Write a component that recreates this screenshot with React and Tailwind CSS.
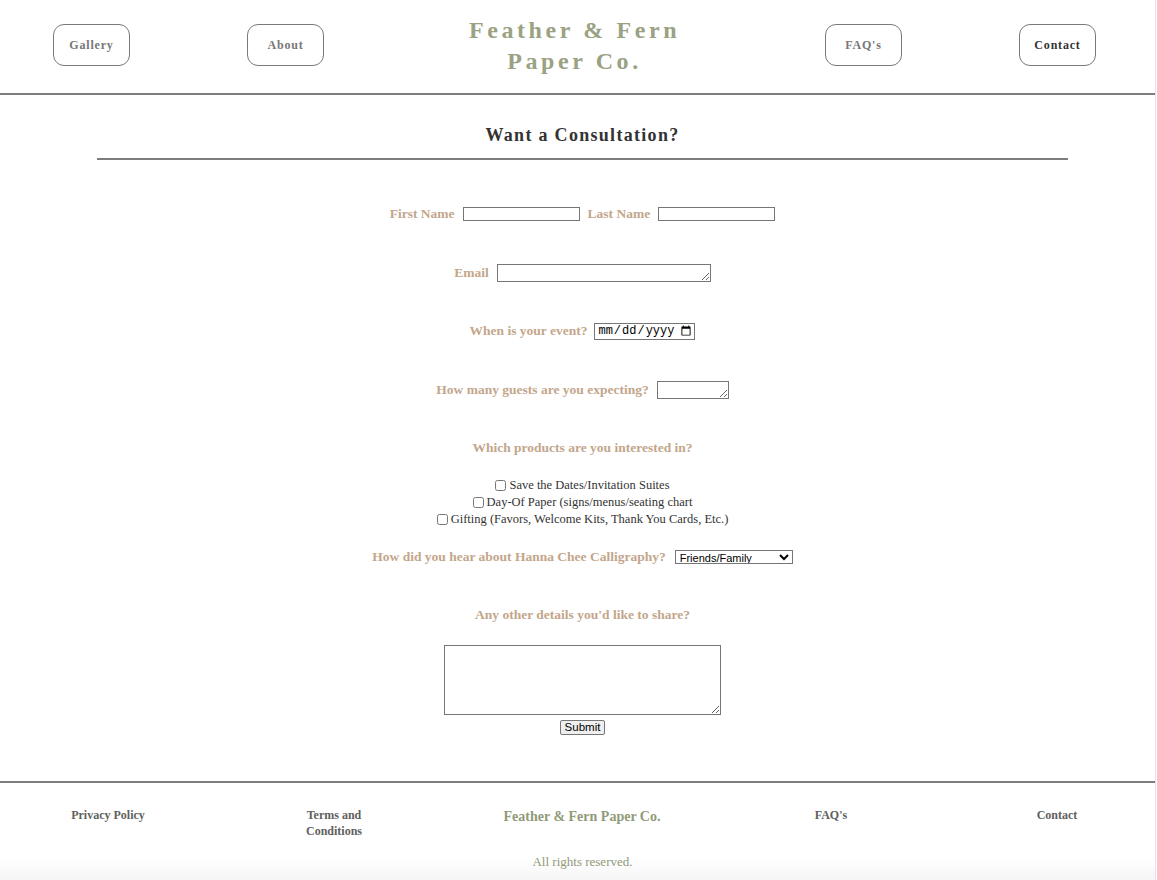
import { useState } from 'react';

const serif = { fontFamily: '"Liberation Serif", "Times New Roman", serif' };

const navLinks = ['Gallery', 'About'];
const navRight = ['FAQ\'s', 'Contact'];

const NavButton = ({ label, dark }) => (
  <button
    className={`flex h-[42px] w-[77px] items-center justify-center rounded-[11px] border border-[#7a7a7a] text-[12px] font-semibold tracking-[0.8px] ${dark ? 'text-[#333]' : 'text-[#777]'}`}
  >
    {label}
  </button>
);

const products = [
  'Save the Dates/Invitation Suites',
  'Day-Of Paper (signs/menus/seating chart',
  'Gifting (Favors, Welcome Kits, Thank You Cards, Etc.)',
];

const Label = ({ children }) => (
  <span className="text-[13.5px] font-bold leading-[20px] text-[#c3a68b]">{children}</span>
);

export default function App() {
  const [source, setSource] = useState('Friends/Family');

  return (
    <div className="flex w-[1157px] bg-white" style={serif}>
      <div className="w-[1155px]">
        {/* header */}
        <header className="flex h-[95px] items-center border-b-2 border-[#7d7d7d] pl-[53px] pr-[59px] pb-[3px]">
          <NavButton label={navLinks[0]} />
          <div className="ml-[117px]">
            <NavButton label={navLinks[1]} />
          </div>
          <div className="flex-1 pt-[1px] text-center text-[24px] font-semibold leading-[31px] tracking-[3.6px] text-[#9aa283]">
            <div>Feather &amp; Fern</div>
            <div>Paper Co.</div>
          </div>
          <NavButton label={navRight[0]} />
          <div className="ml-[117px]">
            <NavButton label={navRight[1]} dark />
          </div>
        </header>

        <div className="pl-[10px]">
          {/* heading */}
          <div className="mt-[30px] flex h-[20px] items-center justify-center text-[18px] font-bold tracking-[1.3px] text-[#333]">
            Want a Consultation?
          </div>
          <div className="mx-auto mt-[13px] h-[2px] w-[971px] bg-[#7d7d7d]" />

          {/* form */}
          <form className="flex flex-col items-center" onSubmit={(e) => e.preventDefault()}>
            <div className="mt-[44px] flex h-[20px] items-center">
              <Label>First Name</Label>
              <input className="ml-[8px] h-[14px] w-[117px] border border-[#767676]" />
              <span className="ml-[8px] flex"><Label>Last Name</Label></span>
              <input className="ml-[8px] h-[14px] w-[117px] border border-[#767676]" />
            </div>

            <div className="mt-[39px] flex h-[20px] items-center">
              <Label>Email</Label>
              <textarea rows={1} className="ml-[8px] h-[18px] w-[214px] border border-[#767676]" />
            </div>

            <div className="mt-[38px] flex h-[20px] items-center">
              <Label>When is your event?</Label>
              <input
                type="date"
                className="ml-[7px] h-[17px] w-[101px] border border-[#767676] pl-[2px] text-[12px] leading-none text-black"
                style={{ fontFamily: '"Liberation Mono", monospace' }}
              />
            </div>

            <div className="mt-[39px] flex h-[20px] items-center">
              <Label>How many guests are you expecting?</Label>
              <textarea rows={1} className="ml-[8px] h-[18px] w-[72px] border border-[#767676]" />
            </div>

            <div className="mt-[38px] flex h-[20px] items-center">
              <Label>Which products are you interested in?</Label>
            </div>

            <div className="mt-[19px] flex flex-col items-center text-[12.5px] leading-[17px] text-[#333]">
              {products.map((p) => (
                <label key={p} className="flex items-center">
                  <input type="checkbox" className="mr-[3px] h-[11px] w-[11px]" />
                  {p}
                </label>
              ))}
            </div>

            <div className="mt-[19px] flex h-[20px] items-center">
              <Label>How did you hear about Hanna Chee Calligraphy?</Label>
              <select
                value={source}
                onChange={(e) => setSource(e.target.value)}
                className="ml-[9px] h-[14px] w-[118px] border border-[#767676] bg-white p-0 text-[11px] leading-none text-black"
                style={{ fontFamily: '"Liberation Sans", Arial, sans-serif' }}
              >
                <option>Friends/Family</option>
                <option>Instagram</option>
                <option>Google</option>
                <option>Other</option>
              </select>
            </div>

            <div className="mt-[38px] flex h-[20px] items-center">
              <Label>Any other details you'd like to share?</Label>
            </div>

            <textarea className="mt-[20px] h-[70px] w-[277px] border border-[#767676]" />
            <button
              type="submit"
              className="mt-[5px] flex h-[15px] items-center rounded-[2px] border border-[#767676] bg-[#efefef] px-[4px] text-[11.5px] leading-none text-black"
              style={{ fontFamily: '"Liberation Sans", Arial, sans-serif' }}
            >
              Submit
            </button>
          </form>
        </div>

        {/* footer */}
        <footer className="mt-[46px] border-t-2 border-[#7d7d7d]">
          <div className="flex pl-[48px] pt-[24px] text-[12px] font-semibold leading-[16px] text-[#606060]">
            <div className="w-[120px] text-center">Privacy Policy</div>
            <div className="ml-[106px] w-[120px] text-center">
              <div className="mx-auto w-[70px]">Terms and Conditions</div>
            </div>
            <div className="ml-[88px] w-[200px] pt-[2px] text-center text-[14px] font-semibold text-[#8f9a78]">
              Feather &amp; Fern Paper Co.
            </div>
            <div className="ml-[89px] w-[120px] text-center">FAQ's</div>
            <div className="ml-[106px] w-[120px] text-center">Contact</div>
          </div>
          <div className="mt-[11px] h-[40px] bg-[linear-gradient(to_bottom,#ffffff_20%,#f1f1f1)] pl-[10px] pt-[2px] text-center text-[13px] text-[#8f9a78]">
            All rights reserved.
          </div>
        </footer>
      </div>
      <div className="w-[1px] bg-[#e3e3e3]" />
      <div className="w-[1px] bg-white" />
    </div>
  );
}
